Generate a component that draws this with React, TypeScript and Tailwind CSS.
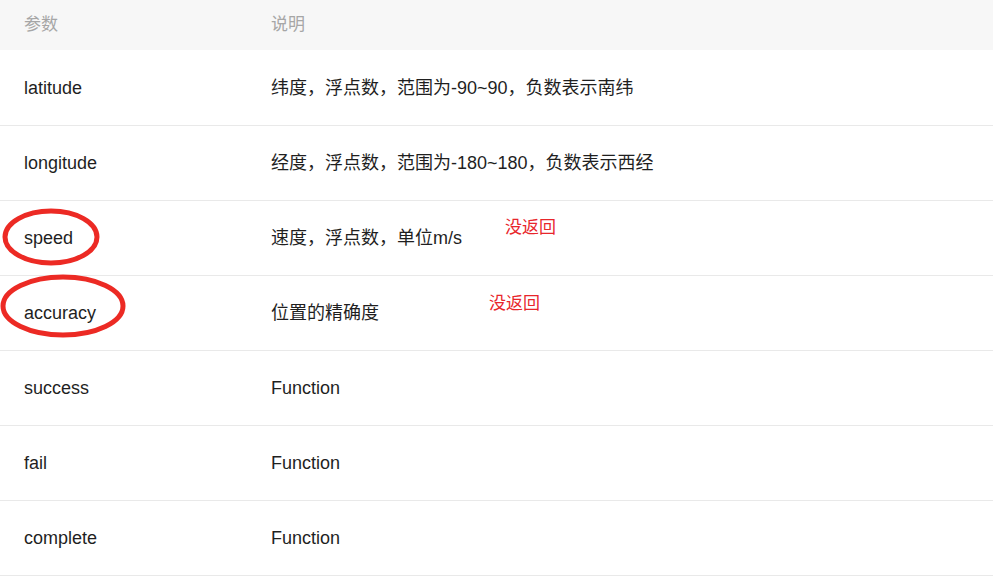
import React from "react";

const rows: [string, string][] = [
  ["latitude", "纬度，浮点数，范围为-90~90，负数表示南纬"],
  ["longitude", "经度，浮点数，范围为-180~180，负数表示西经"],
  ["speed", "速度，浮点数，单位m/s"],
  ["accuracy", "位置的精确度"],
  ["success", "Function"],
  ["fail", "Function"],
  ["complete", "Function"],
];

export default function App() {
  return (
    <div
      className="relative w-[993px] h-[578px] bg-white overflow-hidden text-[18px] text-[#1f1f1f]"
      style={{ fontFamily: '"Liberation Sans", "Noto Sans CJK SC", sans-serif' }}
    >
      <div className="flex h-[50px] items-center bg-[#f7f7f7] text-[#a6a6a6] text-[17px]">
        <div className="w-[271px] pl-[24px]">参数</div>
        <div>说明</div>
      </div>
      <div className="pt-[1px]">
        {rows.map(([k, v]) => (
          <div key={k} className="flex h-[75px] items-center border-b border-[#e9e9e9]">
            <div className="w-[271px] pl-[24px]">{k}</div>
            <div>{v}</div>
          </div>
        ))}
      </div>
      <div className="absolute left-[505px] top-[215px] text-[17px] text-[#e8262b]">没返回</div>
      <div className="absolute left-[489px] top-[291px] text-[17px] text-[#e8262b]">没返回</div>
      <svg className="absolute left-0 top-0" width="993" height="578">
        <ellipse cx="51" cy="237" rx="46" ry="26" fill="none" stroke="#ec2a24" strokeWidth="5" />
        <ellipse cx="63" cy="306" rx="60" ry="29" fill="none" stroke="#ec2a24" strokeWidth="5" />
      </svg>
    </div>
  );
}
